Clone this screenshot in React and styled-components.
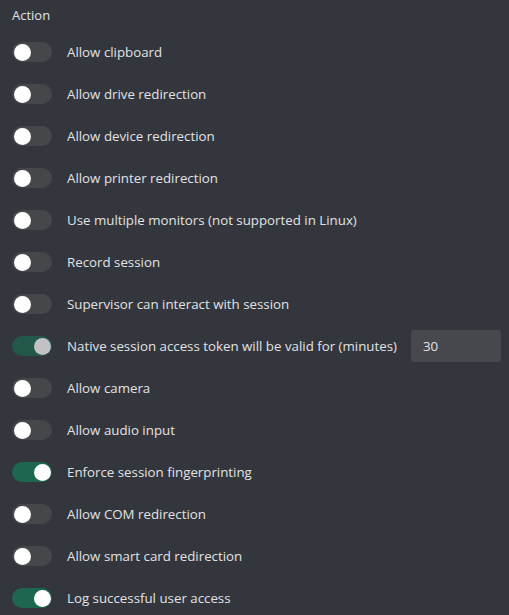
import React from "react";
import styled, { createGlobalStyle } from "styled-components";

const GlobalStyle = createGlobalStyle`
  html, body {
    margin: 0;
    background: #33363d;
  }
  body {
    font-family: "Open Sans", "Noto Sans", sans-serif;
    color: #e2e2e4;
  }
`;

const Panel = styled.section`
  width: 509px;
  height: 615px;
  padding: 5px 8px 0 12px;
  box-sizing: border-box;
  background: #33363d;
`;

const Heading = styled.div`
  font-size: 13px;
  line-height: 20px;
  margin-bottom: 6px;
`;

const Row = styled.div`
  display: flex;
  align-items: center;
  height: 42px;
`;

const Track = styled.span`
  position: relative;
  flex: none;
  width: 40px;
  height: 20px;
  border-radius: 10px;
  background: ${(p) => (p.$on ? (p.$muted ? "#22584a" : "#1e6650") : "#46474b")};
`;

const Knob = styled.span`
  position: absolute;
  top: 1.5px;
  left: ${(p) => (p.$on ? "21.5px" : "1.5px")};
  width: 17px;
  height: 17px;
  border-radius: 50%;
  background: ${(p) => (p.$muted ? "#c2c2c6" : "#ffffff")};
`;

const Label = styled.span`
  margin-left: 15px;
  font-size: 13.3px;
  white-space: nowrap;
`;

const NumberBox = styled.div`
  margin-left: 14px;
  width: 90px;
  height: 32px;
  box-sizing: border-box;
  padding-left: 12px;
  display: flex;
  align-items: center;
  background: #46484d;
  border-radius: 2px;
  font-size: 13.3px;
`;

const options = [
  { label: "Allow clipboard" },
  { label: "Allow drive redirection" },
  { label: "Allow device redirection" },
  { label: "Allow printer redirection" },
  { label: "Use multiple monitors (not supported in Linux)" },
  { label: "Record session" },
  { label: "Supervisor can interact with session" },
  { label: "Native session access token will be valid for (minutes)", on: true, muted: true, value: "30" },
  { label: "Allow camera" },
  { label: "Allow audio input" },
  { label: "Enforce session fingerprinting", on: true },
  { label: "Allow COM redirection" },
  { label: "Allow smart card redirection" },
  { label: "Log successful user access", on: true },
];

function Toggle({ on, muted }) {
  return (
    <Track $on={on} $muted={muted}>
      <Knob $on={on} $muted={muted} />
    </Track>
  );
}

export default function App() {
  return (
    <>
      <GlobalStyle />
      <Panel>
        <Heading>Action</Heading>
        {options.map((o) => (
          <Row key={o.label}>
            <Toggle on={o.on} muted={o.muted} />
            <Label>{o.label}</Label>
            {o.value && <NumberBox>{o.value}</NumberBox>}
          </Row>
        ))}
      </Panel>
    </>
  );
}
